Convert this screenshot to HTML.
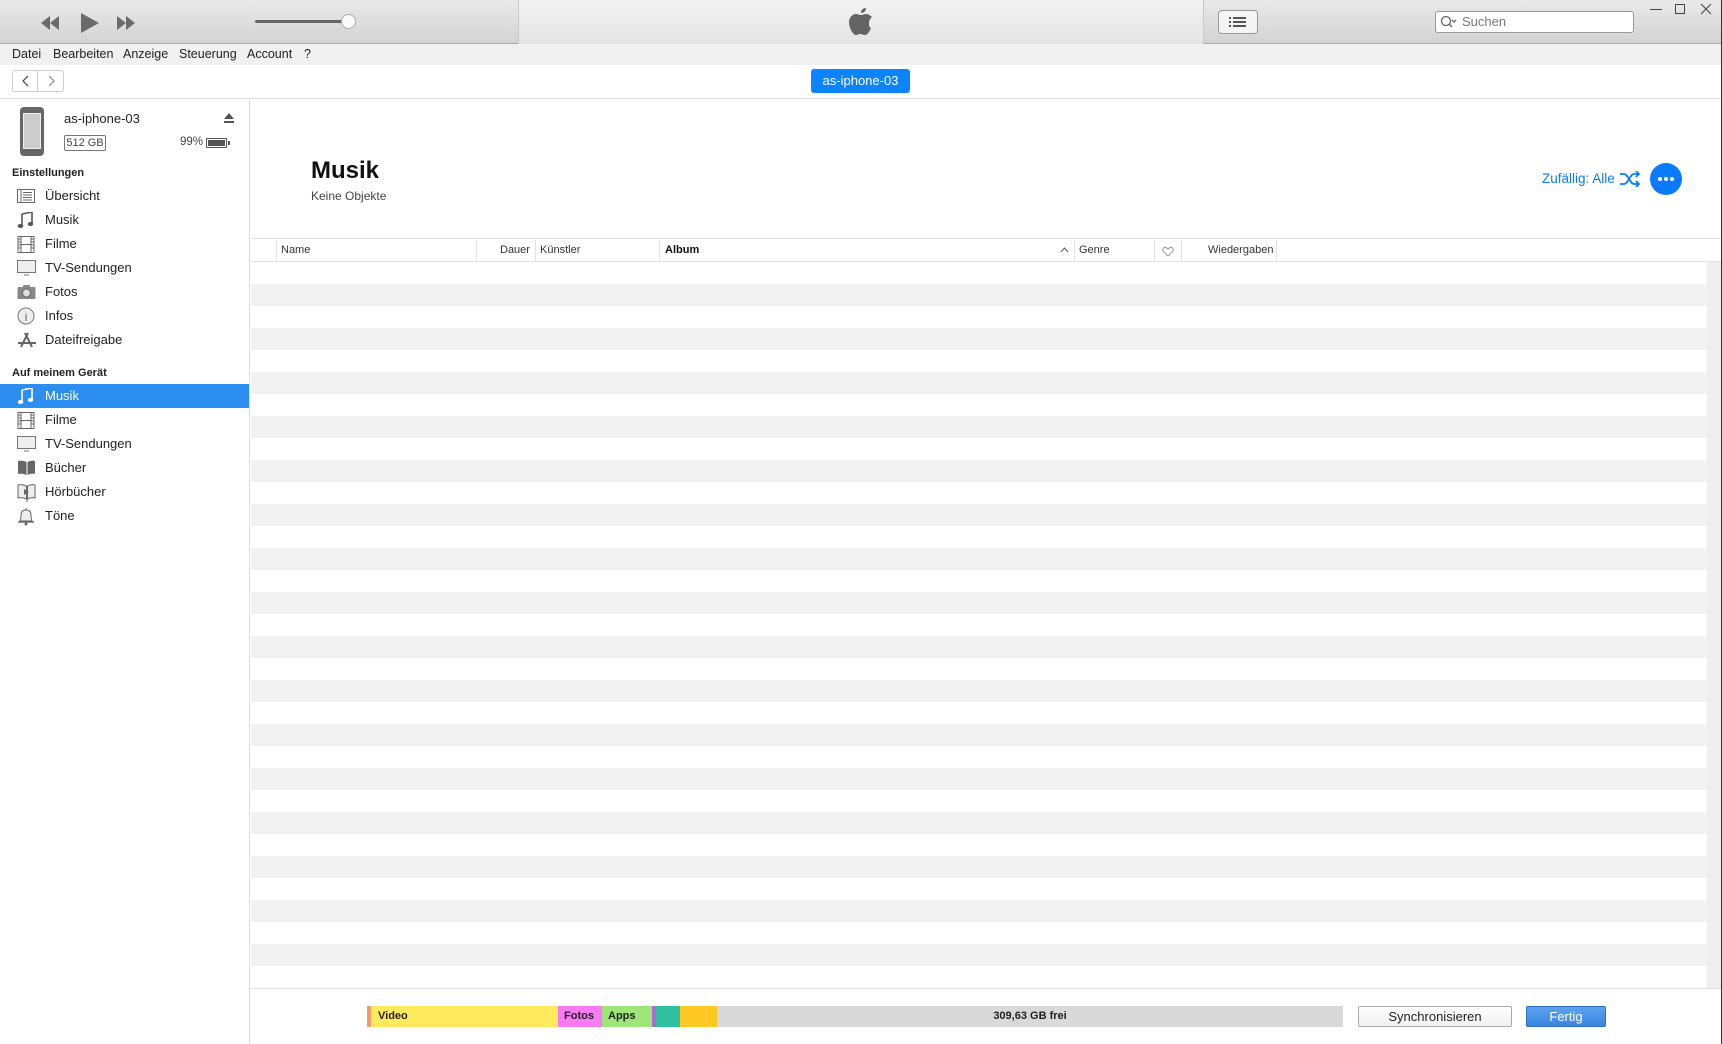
<!DOCTYPE html>
<html><head><meta charset="utf-8">
<style>
*{margin:0;padding:0;box-sizing:border-box}
body{width:1722px;height:1044px;overflow:hidden;background:#fff;font-family:"Liberation Sans",sans-serif;position:relative;color:#222}
.abs{position:absolute}
#title{left:0;top:0;width:1722px;height:44px;background:linear-gradient(#e9e9e9,#d3d3d3);border-bottom:1px solid #aaa}
#lcd{left:518px;top:0;width:686px;height:44px;background:linear-gradient(#f2f2f2,#e4e4e4);border-left:1px solid #c8c8c8;border-right:1px solid #c8c8c8}
#menu{left:0;top:44px;width:1722px;height:21px;background:#f0f0f0;font-size:12.5px}
#menu span{position:absolute;top:3px}
#nav{left:0;top:65px;width:1722px;height:34px;background:#fff;border-bottom:1px solid #e0e0e0}
#side{left:0;top:99px;width:250px;height:945px;background:#fff;border-right:1px solid #ddd}
.row{position:absolute;left:0;width:249px;height:24px;font-size:13px;line-height:24px}
.row span{position:absolute;left:45px}
.row svg{position:absolute;left:17px;top:4px}
.hdr{position:absolute;left:12px;font-size:11px;font-weight:bold}
.sel{background:#2b8ef0;color:#fff}
#stripes{left:251px;top:262px;width:1456px;height:726px;background:repeating-linear-gradient(#fff 0,#fff 22px,#f2f2f2 22px,#f2f2f2 44px)}
#scroll{left:1707px;top:262px;width:14px;height:726px;background:#efefef}
.th{position:absolute;top:244px;font-size:11px;color:#333}
.sep{position:absolute;top:240px;width:1px;height:21px;background:#e2e2e2}
.seg{position:absolute;top:1006px;height:21px;font-size:11px;font-weight:bold;line-height:21px}
</style></head><body>
<div class="abs" style="left:1721px;top:0;width:1px;height:1044px;background:#333;z-index:9"></div>
<div id="title" class="abs"></div>
<div id="lcd" class="abs"></div>
<svg class="abs" style="left:38px;top:12px" width="110" height="22" viewBox="0 0 110 22">
<path d="M3 11 L12 4 V18Z M12 11 L21 4 V18Z" fill="#6a6a6a"/>
<path d="M43 1 L61 11 L43 21Z" fill="#6a6a6a"/>
<path d="M79 4 L88 11 L79 18Z M88 4 L97 11 L88 18Z" fill="#6a6a6a"/>
</svg>
<div class="abs" style="left:255px;top:20px;width:92px;height:3px;background:#666;border-radius:2px"></div>
<div class="abs" style="left:341px;top:14px;width:15px;height:15px;border-radius:50%;background:#fafafa;border:1px solid #aaa"></div>
<svg class="abs" style="left:848px;top:7px" width="26" height="30" viewBox="0 0 26 30">
<path d="M18 1c0 3-2 5-5 5 0-3 2-5 5-5z M21 16c0-3 2-5 3-6-2-2-4-3-6-3-2 0-3 1-5 1s-3-1-5-1c-3 0-7 3-7 8 0 6 4 13 7 13 2 0 2-1 4-1s3 1 5 1c3 0 5-5 6-7-2-1-2-3-2-5z" fill="#646464"/>
</svg>
<div class="abs" style="left:1218px;top:10px;width:40px;height:24px;border:1px solid #999;border-radius:4px;background:#f4f4f4"></div>
<svg class="abs" style="left:1229px;top:15px" width="18" height="14"><g fill="#555"><rect x="0" y="2" width="2" height="2"/><rect x="4" y="2" width="13" height="2"/><rect x="0" y="6" width="2" height="2"/><rect x="4" y="6" width="13" height="2"/><rect x="0" y="10" width="2" height="2"/><rect x="4" y="10" width="13" height="2"/></g></svg>
<div class="abs" style="left:1435px;top:11px;width:199px;height:22px;border:1px solid #999;border-radius:3px;background:#fff"></div>
<svg class="abs" style="left:1440px;top:15px" width="18" height="14"><circle cx="6" cy="6" r="4.5" fill="none" stroke="#666" stroke-width="1.3"/><path d="M9 9 L12 12 M12 5 L14 7 L16 5" stroke="#666" stroke-width="1.3" fill="none"/></svg>
<div class="abs" style="left:1462px;top:14px;font-size:13px;color:#777">Suchen</div>
<div class="abs" style="left:1650px;top:9px;width:12px;height:1px;background:#444"></div>
<div class="abs" style="left:1675px;top:4px;width:10px;height:10px;border:1px solid #444"></div>
<svg class="abs" style="left:1700px;top:3px" width="12" height="12"><path d="M1 1L11 11M11 1L1 11" stroke="#444"/></svg>
<div id="menu" class="abs"><span style="left:12px">Datei</span><span style="left:53px">Bearbeiten</span><span style="left:123px">Anzeige</span><span style="left:179px">Steuerung</span><span style="left:247px">Account</span><span style="left:304px">?</span></div>
<div id="nav" class="abs"></div>
<div class="abs" style="left:12px;top:70px;width:26px;height:22px;border:1px solid #ccc;border-radius:3px 0 0 3px"></div>
<div class="abs" style="left:38px;top:70px;width:26px;height:22px;border:1px solid #ccc;border-left:none;border-radius:0 3px 3px 0"></div>
<svg class="abs" style="left:12px;top:70px" width="52" height="22"><path d="M16 6 L11 11 L16 16" stroke="#555" fill="none" stroke-width="1.3"/><path d="M37 6 L42 11 L37 16" stroke="#999" fill="none" stroke-width="1.3"/></svg>
<div class="abs" style="left:811px;top:69px;width:99px;height:24px;background:#0a84ff;border-radius:3px;color:#fff;font-size:13px;text-align:center;line-height:24px">as-iphone-03</div>
<div id="side" class="abs"></div>
<div class="abs" style="left:20px;top:107px;width:24px;height:49px;background:#666;border-radius:4px"></div>
<div class="abs" style="left:23px;top:113px;width:18px;height:36px;background:#ccc;border:1px solid #eee"></div>
<div class="abs" style="left:64px;top:111px;font-size:13px">as-iphone-03</div>
<div class="abs" style="left:64px;top:135px;width:42px;height:16px;border:1px solid #777;border-radius:2px;font-size:11px;line-height:14px;text-align:center;color:#444">512 GB</div>
<div class="abs" style="left:180px;top:136px;font-size:11.5px;color:#444">99%</div>
<div class="abs" style="left:206px;top:138px;width:21px;height:10px;border:1px solid #555;border-radius:1px;padding:1px"><div style="width:100%;height:100%;background:#555"></div></div>
<div class="abs" style="left:228px;top:141px;width:2px;height:4px;background:#555"></div>
<svg class="abs" style="left:223px;top:112px" width="12" height="12"><path d="M1 7 L6 1 L11 7Z M1 9h10v2H1z" fill="#555"/></svg>

<div class="hdr" style="top:167px">Einstellungen</div>
<div class="row" style="top:184px"><svg width="18" height="16"><rect x="0.5" y="1.5" width="17" height="13" fill="none" stroke="#666"/><path d="M4 2v12M6 4.5h9M6 7h9M6 9.5h9M6 12h9" stroke="#666"/></svg><span>Übersicht</span></div>
<div class="row" style="top:208px"><svg width="18" height="16"><path d="M5 2 L15 0 V12" stroke="#555" stroke-width="1.6" fill="none"/><path d="M5 2V14" stroke="#555" stroke-width="1.6"/><ellipse cx="3.5" cy="14" rx="2.8" ry="2" fill="#555"/><ellipse cx="13.5" cy="12" rx="2.8" ry="2" fill="#555"/></svg><span>Musik</span></div>
<div class="row" style="top:232px"><svg width="18" height="17"><rect x="1" y="0.5" width="16" height="16" fill="none" stroke="#666"/><path d="M4 0.5V16.5M14 0.5V16.5M4 8.5H14" stroke="#666"/><path d="M1.5 3h2M1.5 6h2M1.5 9h2M1.5 12h2M14.5 3h2M14.5 6h2M14.5 9h2M14.5 12h2" stroke="#666"/></svg><span>Filme</span></div>
<div class="row" style="top:256px"><svg width="20" height="16"><rect x="0.5" y="0.5" width="18" height="12" fill="#eee" stroke="#777"/><path d="M7 15h5" stroke="#777"/></svg><span>TV-Sendungen</span></div>
<div class="row" style="top:280px"><svg width="20" height="16"><rect x="0.5" y="3" width="18" height="12" rx="1" fill="#888"/><rect x="6" y="1" width="7" height="3" fill="#888"/><circle cx="9.5" cy="9" r="4" fill="#ddd" stroke="#666"/></svg><span>Fotos</span></div>
<div class="row" style="top:304px"><svg width="18" height="18" style="top:3px"><circle cx="9" cy="9" r="8" fill="#eee" stroke="#777"/><text x="9" y="13.5" font-family="Liberation Serif" font-size="12" text-anchor="middle" fill="#555">i</text></svg><span>Infos</span></div>
<div class="row" style="top:328px"><svg width="20" height="18" style="top:3px"><path d="M4 16 L11 2 M15 16 L8 2 M1 12 H19" stroke="#666" stroke-width="2" fill="none"/></svg><span>Dateifreigabe</span></div>

<div class="hdr" style="top:367px">Auf meinem Gerät</div>
<div class="row sel" style="top:384px"><svg width="18" height="16"><path d="M5 2 L15 0 V12" stroke="#fff" stroke-width="1.6" fill="none"/><path d="M5 2V14" stroke="#fff" stroke-width="1.6"/><ellipse cx="3.5" cy="14" rx="2.8" ry="2" fill="#fff"/><ellipse cx="13.5" cy="12" rx="2.8" ry="2" fill="#fff"/></svg><span>Musik</span></div>
<div class="row" style="top:408px"><svg width="18" height="17"><rect x="1" y="0.5" width="16" height="16" fill="none" stroke="#666"/><path d="M4 0.5V16.5M14 0.5V16.5M4 8.5H14" stroke="#666"/><path d="M1.5 3h2M1.5 6h2M1.5 9h2M1.5 12h2M14.5 3h2M14.5 6h2M14.5 9h2M14.5 12h2" stroke="#666"/></svg><span>Filme</span></div>
<div class="row" style="top:432px"><svg width="20" height="16"><rect x="0.5" y="0.5" width="18" height="12" fill="#eee" stroke="#777"/><path d="M7 15h5" stroke="#777"/></svg><span>TV-Sendungen</span></div>
<div class="row" style="top:456px"><svg width="20" height="16"><path d="M1 1 Q5 0 9.5 2 V15 Q5 13 1 14Z M18 1 Q14 0 10.5 2 V15 Q14 13 18 14Z" fill="#666"/></svg><span>Bücher</span></div>
<div class="row" style="top:480px"><svg width="20" height="18"><path d="M1 1 Q5 0 9.5 2 V15 Q5 13 1 14Z M18 1 Q14 0 10.5 2 V15 Q14 13 18 14Z" fill="#eee" stroke="#666"/><path d="M7 5 L12 8 L7 11Z" fill="#666"/><path d="M10 15v3" stroke="#666"/></svg><span>Hörbücher</span></div>
<div class="row" style="top:504px"><svg width="18" height="18"><path d="M3 13 Q4 11 4 7 Q4 2 9 2 Q14 2 14 7 Q14 11 15 13Z" fill="#eee" stroke="#666"/><path d="M1 14h16" stroke="#666" stroke-width="1.4"/><circle cx="9" cy="16" r="1.5" fill="#666"/><path d="M9 0v2" stroke="#666"/></svg><span>Töne</span></div>

<div class="abs" style="left:311px;top:157px;font-size:24px;font-weight:bold;color:#111">Musik</div>
<div class="abs" style="left:311px;top:189px;font-size:12px;color:#444">Keine Objekte</div>
<div class="abs" style="left:1542px;top:171px;font-size:13.5px;color:#0a7aff">Zufällig: Alle</div>
<svg class="abs" style="left:1619px;top:171px" width="22" height="16"><path d="M1 3h4c4 0 6 10 10 10h5M1 13h4c4 0 6-10 10-10h5M17 0l3 3-3 3M17 10l3 3-3 3" stroke="#0a7aff" stroke-width="1.8" fill="none"/></svg>
<div class="abs" style="left:1650px;top:163px;width:32px;height:32px;border-radius:50%;background:#0a7aff"></div>
<svg class="abs" style="left:1650px;top:163px" width="32" height="32"><circle cx="10" cy="16" r="2" fill="#fff"/><circle cx="16" cy="16" r="2" fill="#fff"/><circle cx="22" cy="16" r="2" fill="#fff"/></svg>

<div class="abs" style="left:251px;top:238px;width:1470px;height:1px;background:#e2e2e2"></div>
<div class="abs" style="left:251px;top:261px;width:1470px;height:1px;background:#e2e2e2"></div>
<div class="sep" style="left:276px"></div><div class="sep" style="left:476px"></div><div class="sep" style="left:535px"></div><div class="sep" style="left:659px"></div><div class="sep" style="left:1074px"></div><div class="sep" style="left:1154px"></div><div class="sep" style="left:1181px"></div><div class="sep" style="left:1276px"></div>
<div class="th" style="left:281px">Name</div>
<div class="th" style="left:500px">Dauer</div>
<div class="th" style="left:540px">Künstler</div>
<div class="th" style="left:665px;font-weight:bold;color:#111">Album</div>
<svg class="abs" style="left:1060px;top:247px" width="9" height="6"><path d="M1 5L4.5 1L8 5" stroke="#555" fill="none"/></svg>
<div class="th" style="left:1079px">Genre</div>
<svg class="abs" style="left:1162px;top:246px" width="12" height="11"><path d="M6 10 L1.5 5.5 Q0 3.5 1.5 2 Q3.5 0.5 6 3 Q8.5 0.5 10.5 2 Q12 3.5 10.5 5.5Z" fill="none" stroke="#999"/></svg>
<div class="th" style="left:1208px">Wiedergaben</div>

<div id="stripes" class="abs"></div>
<div id="scroll" class="abs"></div>
<div class="abs" style="left:251px;top:988px;width:1470px;height:1px;background:#ddd"></div>

<div class="seg" style="left:367px;width:4px;background:#f49a6a"></div>
<div class="seg" style="left:371px;width:187px;background:#ffea5e;padding-left:7px">Video</div>
<div class="seg" style="left:558px;width:44px;background:#f97af5;padding-left:6px">Fotos</div>
<div class="seg" style="left:602px;width:50px;background:#9ee67a;padding-left:6px">Apps</div>
<div class="seg" style="left:652px;width:4px;background:#b565d6"></div>
<div class="seg" style="left:656px;width:24px;background:#2ec0a0"></div>
<div class="seg" style="left:680px;width:37px;background:#ffc824"></div>
<div class="seg" style="left:717px;width:626px;background:#d9d9d9;text-align:center">309,63 GB frei</div>
<div class="abs" style="left:1358px;top:1006px;width:154px;height:21px;border:1px solid #aaa;border-radius:2px;background:linear-gradient(#fff,#f0f0f0);font-size:13px;text-align:center;line-height:19px">Synchronisieren</div>
<div class="abs" style="left:1526px;top:1006px;width:80px;height:21px;border:1px solid #2a6fc4;border-radius:2px;background:linear-gradient(#5ba4f0,#3a86e0);color:#fff;font-size:13px;text-align:center;line-height:19px">Fertig</div>
</body></html>
